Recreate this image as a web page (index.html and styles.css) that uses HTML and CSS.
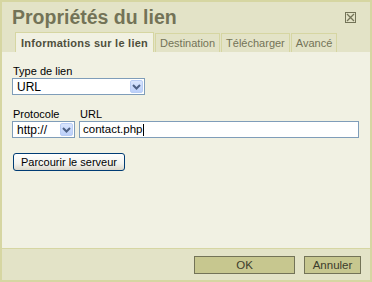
FILE: index.html
```html
<!DOCTYPE html>
<html lang="fr">
<head>
    <meta charset="UTF-8">
    <title>Propriétés du lien</title>
    <link rel="stylesheet" href="styles.css">
</head>
<body>
    <div class="dialog">
        <div class="title-bar">
            <h1 class="title">Propriétés du lien</h1>
            <span class="close">
                <svg width="9" height="9" viewBox="0 0 9 9"><path d="M1 1 L8 8 M8 1 L1 8" stroke="#737357" stroke-width="1.3" fill="none"/></svg>
            </span>
        </div>

        <div class="tabs">
            <span class="tab active">Informations sur le lien</span>
            <span class="tab">Destination</span>
            <span class="tab">Télécharger</span>
            <span class="tab">Avancé</span>
        </div>

        <div class="panel">
            <div class="group">
                <label class="lbl">Type de lien</label>
                <div class="combo combo-type">
                    <span class="combo-text">URL</span>
                    <span class="combo-btn">
                        <svg width="9" height="6" viewBox="0 0 9 6"><path d="M1 1 L4.5 4.5 L8 1" stroke="#4d6185" stroke-width="2" fill="none"/></svg>
                    </span>
                </div>
            </div>

            <div class="group row">
                <div class="col-proto">
                    <label class="lbl small">Protocole</label>
                    <div class="combo">
                        <span class="combo-text">http://</span>
                        <span class="combo-btn">
                            <svg width="9" height="6" viewBox="0 0 9 6"><path d="M1 1 L4.5 4.5 L8 1" stroke="#4d6185" stroke-width="2" fill="none"/></svg>
                        </span>
                    </div>
                </div>
                <div class="col-url">
                    <label class="lbl small">URL</label>
                    <div class="field">contact.php<span class="caret"></span></div>
                </div>
            </div>

            <button class="xp-btn" type="button">Parcourir le serveur</button>
        </div>

        <div class="footer">
            <button class="dlg-btn ok" type="button">OK</button>
            <button class="dlg-btn" type="button">Annuler</button>
        </div>
    </div>
</body>
</html>
```

FILE: styles.css
```css
body {
    margin: 0;
    font-family: "Liberation Sans", Arial, sans-serif;
}

.dialog {
    width: 372px;
    height: 282px;
    box-sizing: border-box;
    border: 2px solid #d6d6a2;
    background-color: #e3e3c7;
    display: flex;
    flex-direction: column;
}

.title-bar {
    height: 30px;
    display: flex;
    align-items: center;
    justify-content: space-between;
    padding: 0 14px 0 10px;
}

.title {
    margin: 0;
    font-size: 19.5px;
    line-height: 30px;
    font-weight: bold;
    color: #737357;
}

.close {
    width: 11px;
    height: 11px;
    box-sizing: border-box;
    border: 1px solid #737357;
    display: flex;
    align-items: center;
    justify-content: center;
}

.close svg {
    display: block;
}

.tabs {
    height: 20px;
    display: flex;
    align-items: flex-end;
    padding-left: 13px;
}

.tab {
    height: 19px;
    box-sizing: border-box;
    border: 1px solid #d6d6a2;
    border-bottom: none;
    padding: 0 4px;
    margin-right: 1px;
    font-size: 11px;
    line-height: 18px;
    color: #737357;
    background-color: #e3e3c7;
}

.tab.active {
    height: 20px;
    line-height: 20px;
    padding: 0 5px;
    font-weight: bold;
    letter-spacing: 0.25px;
    color: #4f4f3c;
    background-color: #f1f1e3;
}

.panel {
    flex: 1;
    background-color: #f1f1e3;
    padding: 12px 11px 0 10px;
}

.lbl {
    display: block;
    font-size: 11px;
    line-height: 14px;
    color: #000;
    padding-left: 1px;
}

.lbl.small {
    line-height: 13px;
}

.row {
    display: flex;
    gap: 4px;
    margin-top: 13px;
}

.col-proto {
    width: 63px;
}

.col-url {
    flex: 1;
}

.combo {
    height: 17px;
    box-sizing: border-box;
    border: 1px solid #7f9db9;
    background-color: #fff;
    display: flex;
    align-items: center;
    padding: 1px;
}

.combo-type {
    width: 133px;
}

.combo-text {
    flex: 1;
    font-size: 12px;
    padding-left: 3px;
    color: #000;
}

.combo-btn {
    width: 13px;
    height: 13px;
    box-sizing: border-box;
    border: 1px solid #b9cdf5;
    border-radius: 2px;
    background: linear-gradient(#d9e5fd, #bcd0fa);
    display: flex;
    align-items: center;
    justify-content: center;
}

.combo-btn svg {
    display: block;
}

.field {
    height: 17px;
    box-sizing: border-box;
    border: 1px solid #7f9db9;
    background-color: #fff;
    font-size: 11.5px;
    line-height: 15px;
    padding-left: 3px;
    color: #000;
    display: flex;
    align-items: center;
}

.caret {
    width: 1px;
    height: 12px;
    background-color: #000;
    margin-left: 1px;
}

.xp-btn {
    margin-top: 15px;
    margin-left: 1px;
    width: 112px;
    height: 18px;
    padding: 0;
    border: 1px solid #003c74;
    border-radius: 3px;
    background: linear-gradient(#ffffff, #f3f3ee 60%, #dcd8cc);
    font-family: "Liberation Sans", Arial, sans-serif;
    font-size: 11px;
    color: #000;
}

.footer {
    height: 32px;
    box-sizing: border-box;
    border-top: 1px solid #d6d6a2;
    display: flex;
    align-items: center;
    justify-content: flex-end;
    gap: 9px;
    padding-right: 9px;
}

.dlg-btn {
    height: 18px;
    width: 57px;
    padding: 0;
    border: 1px solid #737357;
    background-color: #c7c78f;
    font-family: "Liberation Sans", Arial, sans-serif;
    font-size: 11.5px;
    color: #3c3c2c;
}

.dlg-btn.ok {
    width: 101px;
}
```
